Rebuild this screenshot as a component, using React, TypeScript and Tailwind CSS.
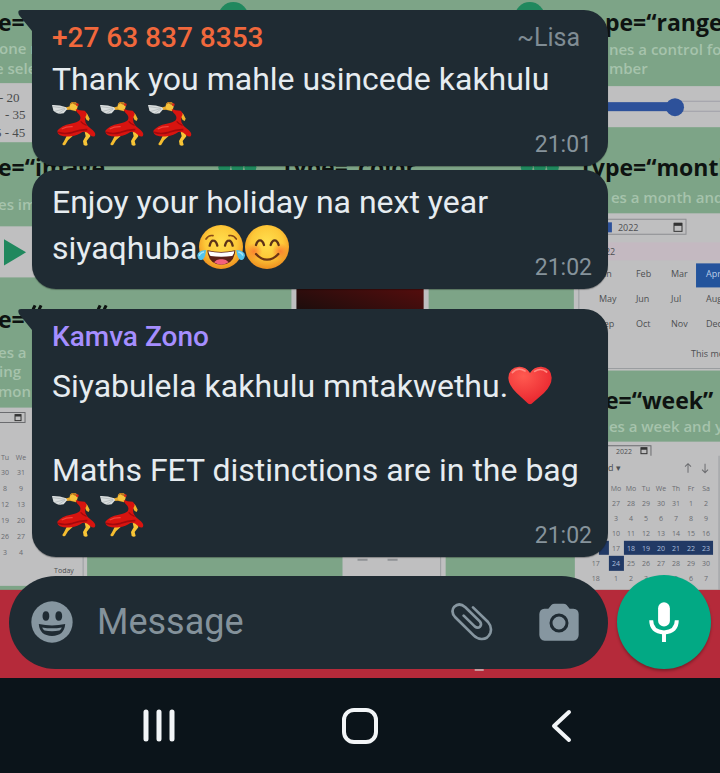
import type { ReactNode } from "react";

function Dancer() {
  return (
    <svg viewBox="0 0 132 132" className="mr-1 size-11 shrink-0" role="img" aria-label="Dancer">
      <path d="M47 96 L66 92 L62 102 L48 115 L40 128 Q33 132 31 126 L36 118 Z" fill="#f5bd2f" />
      <path d="M97 84 L113 86 L115 103 L104 117 L107 129 Q102 133 95 129 L93 117 L101 103 Z" fill="#f8c536" />
      <path d="M34 14 L44 16 L56 12 L76 20 L72 28 L54 23 L38 24 Z" fill="#e9ab2c" />
      <path d="M99 30 L106 36 L113 50 L110 57 L104 54 L96 40 Z" fill="#f0b12a" />
      <path d="M0 9 Q22 8 42 16 L46 21 L35 34 Q14 39 4 25 Z" fill="#d9dddd" />
      <path d="M3 14 L39 19 M9 28 L38 20 M20 34 L40 21" stroke="#a9b1b4" strokeWidth="2" />
      <path d="M70 20 Q82 26 98 26 Q106 31 103 40 Q97 48 101 62 Q105 72 117 80 Q133 91 129 101 Q124 107 114 99 Q103 87 91 90 Q78 100 57 103 Q37 105 24 100 Q14 94 17 85 Q28 70 56 65 Q76 62 83 55 Q88 47 82 38 Q73 31 70 20 Z" fill="#d8140f" />
      <path d="M18 91 Q38 98 62 91 Q86 82 106 83" stroke="#a3090d" strokeWidth="5" fill="none" />
      <path d="M86 58 Q92 66 104 70" stroke="#a3090d" strokeWidth="4" fill="none" />
      <path d="M29 81 Q44 73 62 74" stroke="#f3443a" strokeWidth="4" fill="none" />
      <circle cx="65" cy="12" r="12" fill="#f6c33c" />
      <path d="M54 9 Q55 0 65 0 Q75 1 77 11 Q66 8 61 4 Z" fill="#b9741c" />
      <circle cx="76" cy="8" r="4" fill="#d7261a" />
    </svg>
  );
}

function FaceShade({ id }: { id: string }) {
  return (
    <defs>
      <radialGradient id={id} cx="50%" cy="40%" r="60%">
        <stop offset="0" stopColor="#ffe04f" />
        <stop offset="0.6" stopColor="#fdc838" />
        <stop offset="1" stopColor="#ee8f1f" />
      </radialGradient>
      <radialGradient id={`${id}-cheek`}>
        <stop offset="0" stopColor="#fb6a2c" stopOpacity="0.75" />
        <stop offset="1" stopColor="#fb6a2c" stopOpacity="0" />
      </radialGradient>
    </defs>
  );
}

function JoyFace() {
  return (
    <svg viewBox="0 0 144 132" className="h-11 w-12 shrink-0" role="img" aria-label="Tears of joy">
      <FaceShade id="joy" />
      <circle cx="72" cy="66" r="66" fill="url(#joy)" />
      <path d="M27 42 Q35 29 48 32 M96 32 Q110 29 118 42" stroke="#8a4a16" strokeWidth="5" fill="none" strokeLinecap="round" />
      <path d="M38 62 Q42 46 49 47 Q57 47 61 62 M84 62 Q88 47 95 47 Q103 46 107 62" stroke="#5c3218" strokeWidth="7" fill="none" strokeLinecap="round" />
      <path d="M31 76 Q72 86 115 76 Q111 119 73 119 Q35 119 31 76 Z" fill="#5b2017" />
      <path d="M34 79 Q72 87 112 79 Q111 90 105 93 Q72 98 41 93 Q35 89 34 79 Z" fill="#fff" />
      <path d="M51 112 Q61 100 73 103 Q85 100 95 112 Q84 119 73 119 Q61 119 51 112 Z" fill="#f3617c" />
      <path d="M27 75 Q2 77 1 91 Q2 106 13 105 Q25 103 27 75 Z M118 75 Q143 77 144 91 Q142 106 132 105 Q121 103 118 75 Z" fill="#54c3ec" />
      <path d="M21 81 Q8 84 7 93 M124 81 Q136 84 137 92" stroke="#a6e6fa" strokeWidth="4" fill="none" />
    </svg>
  );
}

function BlushFace() {
  return (
    <svg viewBox="0 0 132 132" className="size-11 shrink-0" role="img" aria-label="Smiling face">
      <FaceShade id="blush" />
      <circle cx="66" cy="66" r="66" fill="url(#blush)" />
      <circle cx="27" cy="79" r="25" fill="url(#blush-cheek)" />
      <circle cx="106" cy="79" r="25" fill="url(#blush-cheek)" />
      <path d="M33 60 Q37 46 45 46 Q53 46 57 60 M77 60 Q81 46 89 46 Q97 46 101 60" stroke="#5c3218" strokeWidth="7" fill="none" strokeLinecap="round" />
      <path d="M33 87 Q48 104 66 104 Q85 104 100 87" stroke="#6c3515" strokeWidth="7" fill="none" strokeLinecap="round" />
    </svg>
  );
}

function Heart() {
  return (
    <svg viewBox="0 0 132 132" className="size-11 shrink-0" role="img" aria-label="Red heart">
      <defs>
        <radialGradient id="heart" cx="35%" cy="25%" r="80%">
          <stop offset="0" stopColor="#ff5a50" />
          <stop offset="1" stopColor="#e8232d" />
        </radialGradient>
      </defs>
      <path d="M66 30 Q53 10 33 11 Q2 14 1 45 Q2 67 26 90 L56 118 Q66 130 76 118 L108 90 Q131 67 131 44 Q129 13 100 11 Q79 10 66 30 Z" fill="url(#heart)" />
      <path d="M13 29 Q29 11 51 24 M80 25 Q99 13 116 27" stroke="#ff8a80" strokeWidth="5" fill="none" strokeLinecap="round" />
    </svg>
  );
}

const monthRows = [
  { y: 277, names: ["Jan", "Feb", "Mar"] },
  { y: 302, names: ["May", "Jun", "Jul", "Aug"] },
  { y: 327, names: ["Sep", "Oct", "Nov", "Dec"] },
];
const weekColumns = [615, 630, 645, 660, 675, 690, 705];
const weekRows = [
  { y: 490, days: ["Mo", "Mo", "Tu", "We", "Th", "Fr", "Sa"] },
  { y: 505, days: ["27", "28", "29", "30", "31", "1", "2"] },
  { y: 520, days: ["3", "4", "5", "6", "7", "8", "9"] },
  { y: 535, days: ["10", "11", "12", "13", "14", "15", "16"] },
  { y: 565, days: ["24", "25", "26", "27", "28", "29", "30"] },
  { y: 580, days: ["1", "2", "3", "4", "5", "6", "7"] },
];
const leftRows = [
  { y: 459, days: ["Tu", "We"] },
  { y: 474, days: ["30", "31"] },
  { y: 490, days: ["8", "9"] },
  { y: 506, days: ["12", "13"] },
  { y: 522, days: ["19", "20"] },
  { y: 538, days: ["26", "27"] },
  { y: 554, days: ["3", "4"] },
];

function Wallpaper() {
  return (
    <svg
      aria-hidden="true"
      viewBox="0 0 720 677"
      preserveAspectRatio="xMinYMin slice"
      className="absolute inset-0 size-full font-['Open_Sans',sans-serif]"
    >
      <defs>
        <linearGradient id="swatch" x1="0" y1="1" x2="1" y2="0">
          <stop offset="0" stopColor="#120d0c" />
          <stop offset="1" stopColor="#5c0d0d" />
        </linearGradient>
      </defs>
      <rect width="720" height="677" fill="#7da487" />
      <g fill="#bfbfc0">
        <rect y="83" width="60" height="59" />
        <rect y="226" width="60" height="51" />
        <rect y="407" width="87" height="178" />
        <rect x="291" y="280" width="137" height="40" />
        <rect x="342" y="540" width="103" height="49" />
        <rect x="590" y="86" width="130" height="41" />
        <rect x="573" y="213" width="147" height="157" />
        <rect x="574" y="441" width="146" height="148" />
      </g>
      <path d="M83 407 V589 M440 540 V589 M578 213 V370 M718 455 V589 M600 368 H720" stroke="#9a9da0" strokeWidth="1" fill="none" />
      <rect x="296" y="280" width="127" height="40" fill="url(#swatch)" />
      <g fill="#20885e">
        <circle cx="233" cy="17" r="15" />
        <circle cx="529" cy="17" r="15" />
        <path d="M4 239 L26 252 L4 265 Z" />
        <circle cx="224" cy="167" r="6" />
        <circle cx="237" cy="167" r="6" />
        <circle cx="250" cy="167" r="6" />
        <circle cx="526" cy="167" r="6" />
        <circle cx="539" cy="167" r="6" />
        <circle cx="552" cy="167" r="6" />
      </g>
      <g fill="#0e1311" fontSize="23" fontWeight="700">
        <text x="-2" y="31">e=</text>
        <text x="-2" y="176">e=“image</text>
        <text x="-2" y="328">e=</text>
        <text x="283" y="176">type=“color”</text>
        <text x="604" y="31">pe=“range</text>
        <text x="581" y="176">type=“month”</text>
        <text x="604" y="408">e=“week”</text>
      </g>
      <path d="M33 309 L35 305 M39 309 L41 305 M98 309 L100 305 M104 309 L106 305" stroke="#0e1311" strokeWidth="3" />
      <g fill="#a6c3ac" fontSize="15" fontWeight="600">
        <text x="-1" y="54">one r</text>
        <text x="-5" y="74">e sele</text>
        <text x="-2" y="210">es im</text>
        <text x="-2" y="357">es a</text>
        <text x="-1" y="376">ing</text>
        <text x="-2" y="396">mon</text>
        <text x="608" y="55">nes a control for</text>
        <text x="608" y="74">mber</text>
        <text x="610" y="203">es a month and</text>
        <text x="608" y="431">es a week and y</text>
      </g>
      <g fill="#4a4c4d" fontSize="13" className="font-['Liberation_Serif',serif]">
        <text x="-1" y="102">- 20</text>
        <text x="5" y="119">- 35</text>
        <text x="-5" y="137">5 - 45</text>
      </g>
      <path d="M668 101 H720 M668 111 H720" stroke="#a0a0a8" />
      <rect x="600" y="102" width="74" height="9" fill="#2d519a" />
      <circle cx="674" cy="107" r="9" fill="#2d519a" />
      <rect x="590" y="242" width="130" height="18" fill="#c4b9c1" />
      <path d="M600 219 H685 V234 H600" fill="none" stroke="#8c8d90" />
      <rect x="604" y="222" width="7" height="10" fill="#2d519a" />
      <rect x="673" y="223" width="8" height="8" fill="none" stroke="#333" strokeWidth="1" />
      <path d="M673 224 H681" stroke="#333" strokeWidth="3" />
      <rect x="695" y="263" width="25" height="24" fill="#23549c" />
      <g fontSize="9" fill="#4d4f52">
        <text x="617" y="231">2022</text>
        <text x="604" y="255">22</text>
        {monthRows.map((row) =>
          row.names.map((name, i) => (
            <text key={name} x={[598, 635, 670, 705][i]} y={row.y}>{name}</text>
          )),
        )}
        <text x="705" y="277" fill="#b9cde8">Apr</text>
        <text x="690" y="356">This mo</text>
        <text x="615" y="453" fontSize="7">2022</text>
        <text x="607" y="470">d ▾</text>
        <text x="54" y="572" fontSize="7">Today</text>
      </g>
      <path d="M570 445 H650 V455 M687 463 V472 M684 466 L687 463 L690 466 M704 463 V472 M701 469 L704 472 L707 469 M0 412 H25 V422 H0" stroke="#6b6c6f" fill="none" />
      <rect x="640" y="447" width="6" height="6" fill="none" stroke="#333" strokeWidth="1" />
      <rect x="15" y="414" width="6" height="6" fill="none" stroke="#333" strokeWidth="1" />
      <path d="M640 448 H646 M15 415 H21" stroke="#333" strokeWidth="2" />
      <rect x="623" y="540" width="89" height="14" fill="#213965" />
      <rect x="598" y="540" width="10" height="14" fill="#213965" />
      <rect x="608" y="555" width="15" height="15" fill="#213965" />
      <g fontSize="7" fill="#696b70" textAnchor="middle">
        {weekRows.map((row) =>
          row.days.map((day, i) => (
            <text
              key={`${row.y}-${i}`}
              x={weekColumns[i]}
              y={row.y}
              fill={row.y === 565 && i === 0 ? "#aebfdc" : "#696b70"}
            >
              {day}
            </text>
          )),
        )}
        {leftRows.map((row) =>
          row.days.map((day, i) => (
            <text key={`${row.y}-${i}`} x={[5, 21][i]} y={row.y}>{day}</text>
          )),
        )}
        {["17", "18", "19", "20", "21", "22", "23"].map((day, i) => (
          <text key={day} x={weekColumns[i]} y="550" fill={i === 0 ? "#696b70" : "#aebfdc"}>{day}</text>
        ))}
        <text x="595" y="565">17</text>
        <text x="595" y="580">18</text>
      </g>
      <path d="M357 559 H367 M387 559 H397" stroke="#8f9194" strokeWidth="2" />
      <rect y="589" width="720" height="88" fill="#b52a3a" />
      <rect x="474" y="666" width="9" height="4" fill="#c9989c" />
    </svg>
  );
}

type BubbleProps = {
  time: string;
  tail?: boolean;
  className?: string;
  children: ReactNode;
};

function Bubble({ time, tail = false, className = "", children }: BubbleProps) {
  return (
    <article
      className={`relative ml-8 mr-28 rounded-3xl bg-[#1f2b33] px-5 pb-5 text-[32px] leading-[42px] text-[#e6ecf0] shadow-[0_1px_1px_rgba(0,0,0,0.3)] ${tail ? "rounded-tl-none" : ""} ${className}`}
    >
      {tail && (
        <svg viewBox="0 0 16 24" className="absolute -left-3.5 top-0 h-6 w-4" aria-hidden="true">
          <path d="M3 0 H16 V24 H14 V21 L1 5 Q-1 0 3 0 Z" fill="#1f2b33" />
        </svg>
      )}
      {children}
      <time className="absolute bottom-2 right-4 text-[23px] leading-[26px] text-[#86939b]">{time}</time>
    </article>
  );
}

function EmojiLine({ children }: { children: ReactNode }) {
  return <p className="flex h-[46px] items-end">{children}</p>;
}

function Composer() {
  return (
    <form className="mt-[18px] flex items-center gap-[9px] px-[9px] pb-[9px]" onSubmit={(e) => e.preventDefault()}>
      <div className="flex h-[93px] min-w-0 flex-1 items-center rounded-full bg-[#1f2b33] pl-[22px] pr-[29px]">
        <button type="button" aria-label="Emoji" className="shrink-0">
          <svg viewBox="0 0 124 124" className="size-[42px]">
            <circle cx="62" cy="62" r="61" fill="#8696a0" />
            <ellipse cx="44" cy="44" rx="10" ry="14" fill="#1f2b33" />
            <ellipse cx="82" cy="44" rx="10" ry="14" fill="#1f2b33" />
            <path d="M23 68 Q62 76 101 68 Q98 103 62 103 Q26 103 23 68 Z" fill="#1f2b33" />
            <path d="M33 78 Q62 83 91 78 Q89 84 84 87 Q62 91 40 87 Q35 84 33 78 Z" fill="#8696a0" />
          </svg>
        </button>
        <input
          type="text"
          aria-label="Message"
          placeholder="Message"
          className="ml-6 min-w-0 flex-1 bg-transparent text-4xl text-white outline-none placeholder:text-[#84929b]"
        />
        <button type="button" aria-label="Attach" className="shrink-0">
          <svg viewBox="0 0 126 114" className="h-[38px] w-[42px]" fill="none" stroke="#8696a0" strokeWidth="8" strokeLinecap="round">
            <path d="M66 13 L111 57 Q124 72 118 90 Q110 109 91 108 Q78 107 68 97 L12 42 Q-2 25 10 11 Q25 -3 43 13 L87 56 Q93 64 87 71 Q80 77 71 70 L38 38" />
          </svg>
        </button>
        <button type="button" aria-label="Camera" className="ml-[46px] shrink-0">
          <svg viewBox="0 0 120 114" className="h-[38px] w-10">
            <path d="M16 17 H28 L37 6 Q41 2 47 2 H73 Q79 2 83 6 L92 17 H103 Q119 18 119 33 V96 Q118 112 103 113 H17 Q2 112 1 96 V33 Q2 18 16 17 Z" fill="#8696a0" />
            <circle cx="60" cy="60" r="24" fill="#8696a0" stroke="#1f2b33" strokeWidth="9" />
          </svg>
        </button>
      </div>
      <button
        type="button"
        aria-label="Record voice message"
        className="flex size-[94px] shrink-0 items-center justify-center rounded-full bg-[#02a984] shadow-[0_2px_3px_rgba(0,0,0,0.3)]"
      >
        <svg viewBox="0 0 90 122" className="h-10 w-[30px]" fill="none" stroke="#fff">
          <rect x="27" y="1" width="36" height="74" rx="18" fill="#fff" stroke="none" />
          <path d="M6 56 Q6 91 45 93 Q84 91 84 56 M45 93 V122" strokeWidth="12" />
        </svg>
      </button>
    </form>
  );
}

export default function App() {
  return (
    <div className="flex min-h-screen flex-col bg-[#0b141a] font-['Roboto',sans-serif]">
      <main className="relative overflow-hidden pt-2.5">
        <Wallpaper />
        <div className="relative">
          <Bubble time="21:01" tail>
            <header className="flex items-center justify-between pr-2 pt-2 leading-[40px]">
              <span className="text-[28px] font-medium text-[#f1683c]">+27 63 837 8353</span>
              <span className="text-[25px] text-[#7f8c94]">~Lisa</span>
            </header>
            <p>Thank you mahle usincede kakhulu</p>
            <EmojiLine>
              <Dancer />
              <Dancer />
              <Dancer />
            </EmojiLine>
          </Bubble>

          <Bubble time="21:02" className="mt-1 pt-[11px]">
            <p>Enjoy your holiday na next year</p>
            <EmojiLine>
              <span>siyaqhuba</span>
              <JoyFace />
              <BlushFace />
            </EmojiLine>
          </Bubble>

          <Bubble time="21:02" tail className="mt-5">
            <header className="pb-1 pt-2 text-[28px] font-medium leading-[40px] text-[#a58eff]">Kamva Zono</header>
            <EmojiLine>
              <span>Siyabulela kakhulu mntakwethu.</span>
              <Heart />
            </EmojiLine>
            <p className="mt-[42px]">Maths FET distinctions are in the bag</p>
            <EmojiLine>
              <Dancer />
              <Dancer />
            </EmojiLine>
          </Bubble>

          <Composer />
        </div>
      </main>

      <nav aria-label="System navigation" className="flex h-24 items-center px-[58px]">
        <button type="button" aria-label="Recent apps" className="flex flex-1 justify-center">
          <svg viewBox="0 0 36 36" className="size-9" stroke="#f2f5f7" strokeWidth="5" strokeLinecap="round">
            <path d="M5 4 V31 M18 4 V31 M31 4 V31" />
          </svg>
        </button>
        <button type="button" aria-label="Home" className="flex flex-1 justify-center">
          <svg viewBox="0 0 36 36" className="size-9" fill="none" stroke="#f2f5f7" strokeWidth="4">
            <rect x="2" y="2" width="32" height="32" rx="10" />
          </svg>
        </button>
        <button type="button" aria-label="Back" className="flex flex-1 justify-center">
          <svg viewBox="0 0 36 36" className="size-9" fill="none" stroke="#f2f5f7" strokeWidth="4" strokeLinecap="round" strokeLinejoin="round">
            <path d="M26 4 L11 18 L26 32" />
          </svg>
        </button>
      </nav>
    </div>
  );
}
